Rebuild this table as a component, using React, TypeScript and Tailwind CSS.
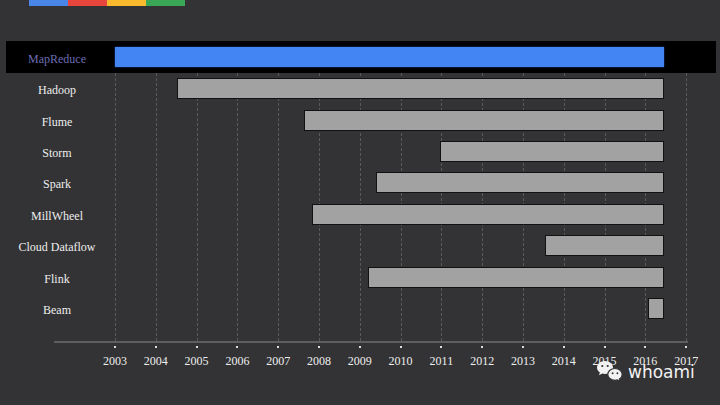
import React from 'react';

const rows = [
  { name: 'MapReduce', start: 115, highlight: true },
  { name: 'Hadoop', start: 177 },
  { name: 'Flume', start: 304 },
  { name: 'Storm', start: 440 },
  { name: 'Spark', start: 376 },
  { name: 'MillWheel', start: 312 },
  { name: 'Cloud Dataflow', start: 545 },
  { name: 'Flink', start: 368 },
  { name: 'Beam', start: 648 },
];

const years = Array.from({ length: 15 }, (_, i) => 2003 + i);

// x where the bar area starts (row margin 6 + label column 102)
const ORIGIN = 108;
const END = 664;

const WeChat = () => (
  <svg width="28" height="25" viewBox="0 0 28 25">
    <path d="M9 1C4.6 1 1 3.9 1 7.5c0 2 1.1 3.8 2.9 5L3 15.3l3.3-1.7c.9.3 1.8.4 2.7.4 4.4 0 8-2.9 8-6.5S13.4 1 9 1z" fill="#f2f2f2" />
    <circle cx="6.3" cy="6" r="1.1" fill="#333335" />
    <circle cx="11.7" cy="6" r="1.1" fill="#333335" />
    <path d="M19 8.5c-4.1 0-7.2 2.7-7.2 5.9s3.1 5.9 7.2 5.9c.8 0 1.6-.1 2.3-.4l2.9 1.6-.8-2.5c1.7-1.1 2.8-2.8 2.8-4.6 0-3.2-3.1-5.9-7.2-5.9z" fill="#f2f2f2" stroke="#333335" strokeWidth="1.2" />
    <circle cx="16.6" cy="13.2" r="0.95" fill="#333335" />
    <circle cx="21.4" cy="13.2" r="0.95" fill="#333335" />
  </svg>
);

const App = () => {
  return (
    <div className="relative w-[720px] h-[405px] overflow-hidden bg-[#333335] font-['Liberation_Serif',serif] text-[12px] text-[#eeeeee]">
      {/* brand strip */}
      <div className="flex ml-[29px] h-[6px]">
        <div className="w-[39px] bg-[#4a86e8]" />
        <div className="w-[39px] bg-[#e8453c]" />
        <div className="w-[39px] bg-[#f9bb2d]" />
        <div className="w-[39px] bg-[#3aa757]" />
      </div>

      {/* grid lines */}
      <div className="absolute top-[73px] left-[115px] h-[268px] flex">
        {years.map((y) => (
          <div key={y} className="w-[40.8px] h-full border-l border-dashed border-[#5a5a5a]" />
        ))}
      </div>

      {/* rows */}
      <div className="relative mt-[35px]">
        {rows.map((r) => (
          <div
            key={r.name}
            className={
              r.highlight
                ? 'flex items-center ml-[6px] w-[710px] h-[32px] bg-black'
                : 'flex items-center ml-[6px] w-[710px] h-[31.43px]'
            }
          >
            <div className={r.highlight ? 'w-[102px] text-center pt-[3px] text-[#6c6cb4]' : 'w-[102px] text-center pt-[3px]'}>
              {r.name}
            </div>
            {r.highlight ? (
              <div
                className="h-[20px] bg-[#4385f2] shadow-[0_0_2px_#1d3f9a]"
                style={{ marginLeft: r.start - ORIGIN, width: END - r.start }}
              />
            ) : (
              <div
                className="h-[21px] bg-[#a2a2a2] border border-[#111111]"
                style={{ marginLeft: r.start - ORIGIN, width: END - r.start }}
              />
            )}
          </div>
        ))}
      </div>

      {/* axis */}
      <div className="mt-[16.5px] ml-[54px] w-[634px] h-[2px] bg-[#5e5e5e]" />
      <div className="flex ml-[94.6px] mt-[3px] h-[2px]">
        {years.map((y) => (
          <div key={y} className="w-[40.8px] flex justify-center">
            <div className="w-[2px] h-[2px] bg-[#dddddd]" />
          </div>
        ))}
      </div>
      <div className="flex ml-[94.6px] mt-[6px] leading-[14px]">
        {years.map((y) => (
          <div key={y} className="w-[40.8px] text-center">
            {y}
          </div>
        ))}
      </div>

      {/* watermark */}
      <div className="absolute left-[596px] top-[360px] flex items-center gap-[4px]">
        <WeChat />
        <span className="font-['DejaVu_Sans',sans-serif] text-[17px] leading-[20px] text-[#f2f2f2] mt-[-2px]">whoami</span>
      </div>
    </div>
  );
};

export default App;
